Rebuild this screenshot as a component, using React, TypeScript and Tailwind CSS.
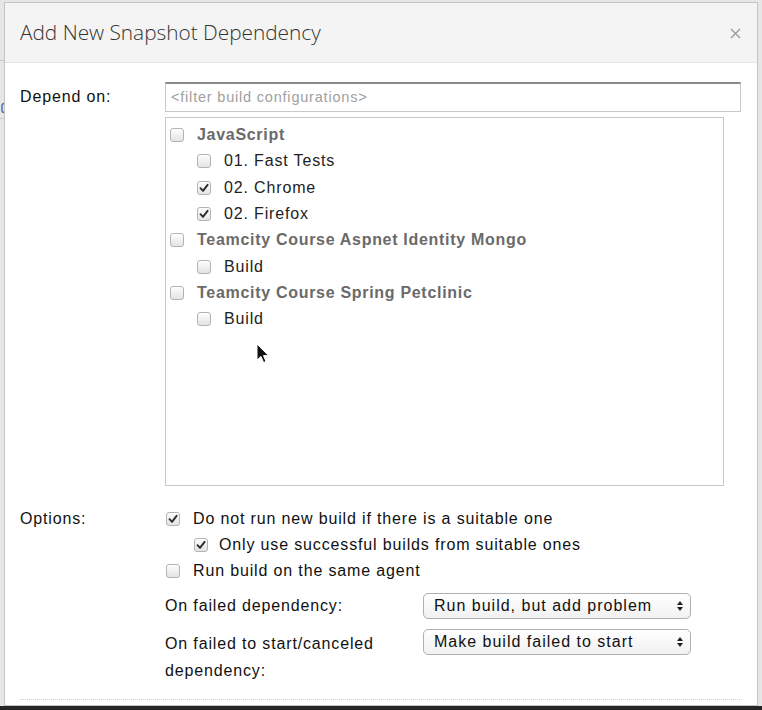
import React from "react";

const Check = ({ checked }: { checked?: boolean }) => (
  <span className="relative inline-flex h-[14px] w-[14px] shrink-0 items-center justify-center rounded-[3px] border border-[#b3b3b3] bg-gradient-to-b from-[#fdfdfd] to-[#e4e4e4] shadow-[inset_0_1px_0_#fff]">
    {checked && (
      <svg width="10" height="10" viewBox="0 0 10 10" className="absolute left-[1px] top-[1px]">
        <path d="M1.5 5.2 L4 7.8 L8.6 1.8" fill="none" stroke="#2b2b2b" strokeWidth="1.9" strokeLinecap="round" strokeLinejoin="round" />
      </svg>
    )}
  </span>
);

const Row = ({ indent, checked, bold, label }: { indent?: boolean; checked?: boolean; bold?: boolean; label: string }) => (
  <div className={"flex h-[26.3px] items-center " + (indent ? "pl-[27px]" : "")}>
    <Check checked={checked} />
    <span className={"ml-[13px] whitespace-nowrap " + (bold ? "font-bold text-[#6a6a6a] tracking-[0.7px]" : "text-[#222]")}>{label}</span>
  </div>
);

const Select = ({ value }: { value: string }) => (
  <div className="flex h-[26px] w-[268px] items-center justify-between rounded-[5px] border border-[#b0b0b0] bg-gradient-to-b from-white to-[#f1f1f1] pl-[10px] pr-[6px] tracking-[1px] text-[#111]">
    <span>{value}</span>
    <svg width="8" height="12" viewBox="0 0 8 12">
      <path d="M4 1 L7 5 L1 5 Z" fill="#222" />
      <path d="M4 11 L7 7 L1 7 Z" fill="#222" />
    </svg>
  </div>
);

export default function App() {
  return (
    <div
      className="relative h-[710px] w-[762px] overflow-hidden bg-[#e6e6e6] text-[16px] tracking-[0.85px]"
      style={{ fontFamily: '"Liberation Sans", Arial, sans-serif' }}
    >
      <div className="absolute left-0 top-[60px] h-[1px] w-[4px] bg-[#c8c8c8]" />
      <svg width="4" height="14" viewBox="0 0 4 14" className="absolute left-0 top-[101px]">
        <path d="M4 2.5 Q2.5 2.5 2 4 L2 10 Q2.5 11.5 4 11.5" fill="none" stroke="#3a6fb0" strokeWidth="1.4" />
      </svg>
      <div className="absolute left-0 top-[118px] h-[1px] w-[4px] bg-[#c8c8c8]" />
      <div className="ml-[4px] mt-[2px] flex h-[704px] w-[754px] flex-col border border-[#c4c4c4] bg-white">
        <div className="flex h-[60px] shrink-0 items-center justify-between border-b border-[#e6e6e6] bg-[#f4f4f4] pl-[15px] pr-[16px]">
          <span
            className="text-[20.8px] font-light tracking-[0px] text-[#333]"
            style={{ fontFamily: '"Open Sans", "Liberation Sans", sans-serif' }}
          >
            Add New Snapshot Dependency
          </span>
          <svg width="11" height="11" viewBox="0 0 11 11" className="mt-[2px]">
            <path d="M1 1 L10 10 M10 1 L1 10" stroke="#9a9a9a" strokeWidth="1.4" />
          </svg>
        </div>
        <div className="flex flex-col pl-[15px]">
          <div className="mt-[19px] flex">
            <div className="w-[145px] pt-[3px] text-[#111]">Depend on:</div>
            <div className="flex flex-col">
              <div className="flex h-[30px] w-[576px] items-center border border-[#c8c8c8] border-t-[2px] border-t-[#8a8a8a] pl-[5px] text-[14.5px] tracking-[0.8px] text-[#a0a0a0]">
                &lt;filter build configurations&gt;
              </div>
              <div className="mt-[5px] h-[369px] w-[559px] border border-[#c8c8c8] pl-[4px] pt-[4px]">
                <Row bold label="JavaScript" />
                <Row indent label="01. Fast Tests" />
                <Row indent checked label="02. Chrome" />
                <Row indent checked label="02. Firefox" />
                <Row bold label="Teamcity Course Aspnet Identity Mongo" />
                <Row indent label="Build" />
                <Row bold label="Teamcity Course Spring Petclinic" />
                <Row indent label="Build" />
              </div>
            </div>
          </div>
          <div className="mt-[20px] flex">
            <div className="flex h-[26px] w-[145px] items-center text-[#111]">Options:</div>
            <div className="flex flex-col text-[#111]">
              <div className="flex h-[26px] items-center pl-[1px]">
                <Check checked />
                <span className="ml-[13px] whitespace-nowrap">Do not run new build if there is a suitable one</span>
              </div>
              <div className="flex h-[26px] items-center pl-[29px]">
                <Check checked />
                <span className="ml-[11px] whitespace-nowrap">Only use successful builds from suitable ones</span>
              </div>
              <div className="flex h-[26px] items-center pl-[1px]">
                <Check />
                <span className="ml-[13px] whitespace-nowrap">Run build on the same agent</span>
              </div>
              <div className="mt-[9px] flex items-center">
                <div className="w-[258px]">On failed dependency:</div>
                <Select value="Run build, but add problem" />
              </div>
              <div className="mt-[10px] flex items-start">
                <div className="w-[258px] pt-[1px] leading-[27px]">
                  On failed to start/canceled
                  <br />
                  dependency:
                </div>
                <Select value="Make build failed to start" />
              </div>
            </div>
          </div>
          <div className="mt-[15px] w-[722px] border-t border-dotted border-[#cfcfcf]" />
        </div>
      </div>
      <div className="absolute bottom-0 left-0 h-[4px] w-full bg-[#262626]" />
      <svg width="14" height="22" viewBox="0 0 14 22" className="absolute left-[256px] top-[343px]">
        <path d="M1 1 L1 17 L5 13.5 L7.6 19.5 L10 18.5 L7.5 12.6 L12.5 12.6 Z" fill="#111" stroke="#fff" strokeWidth="1" strokeLinejoin="round" />
      </svg>
    </div>
  );
}
